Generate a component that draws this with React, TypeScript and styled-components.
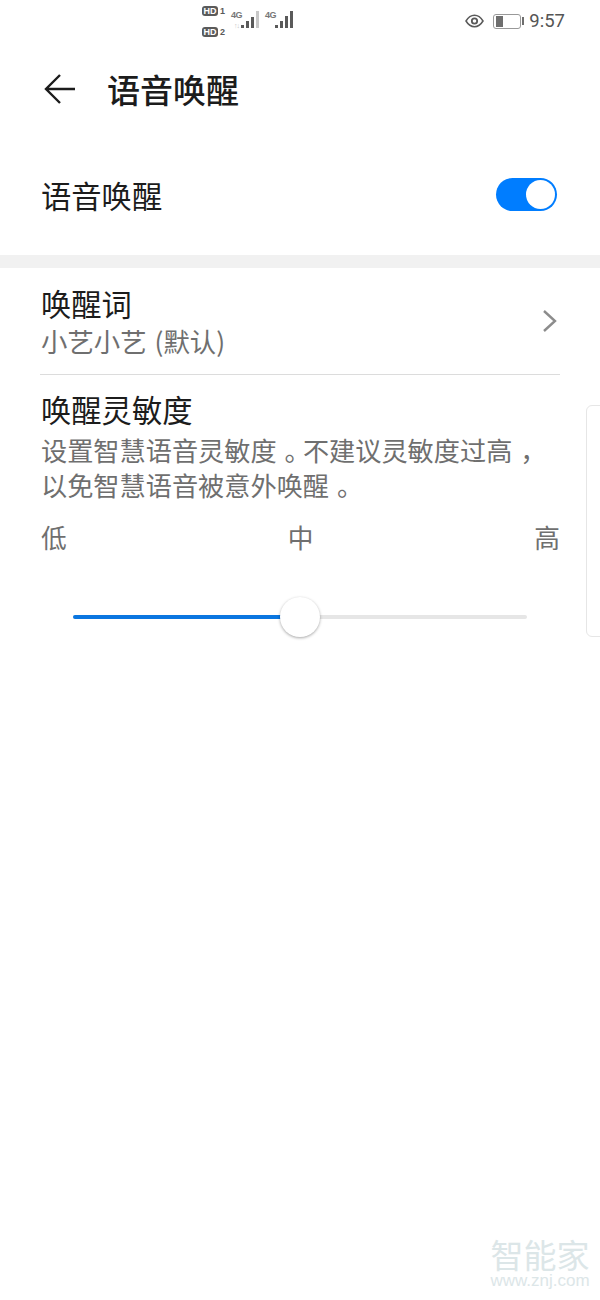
import { createGlobalStyle, styled } from 'styled-components'

const GlobalStyle = createGlobalStyle`
  html, body {
    margin: 0;
    padding: 0;
    background: #fff;
  }
  body {
    font-family: "Noto Sans CJK SC", "Noto Sans", sans-serif;
    color: #1a1a1a;
  }
`

const Page = styled.div`
  position: relative;
  width: 600px;
  height: 1300px;
  overflow: hidden;
  background: #fff;
`

const StatusBar = styled.div`
  display: flex;
  align-items: flex-start;
  height: 44px;
  box-sizing: border-box;
  padding: 6px 35px 0 202px;
`

const SimColumn = styled.div`
  display: flex;
  flex-direction: column;
  gap: 11px;
  margin-right: 5px;
`

const SimTag = styled.div`
  display: flex;
  align-items: center;
  gap: 2px;
`

const HdBadge = styled.span`
  width: 16px;
  height: 10px;
  border-radius: 3px;
  background: #5a5a5a;
  color: #fff;
  font: 700 9px/10px "Liberation Sans", sans-serif;
  text-align: center;
`

const SimNumber = styled.span`
  width: 6px;
  font: 700 9px/10px "Liberation Sans", sans-serif;
  color: #5a5a5a;
`

const Signal = styled.div`
  position: relative;
  display: flex;
  align-items: flex-end;
  gap: 2px;
  width: 28px;
  height: 17px;
  margin: 5px 6px 0 0;
  padding-left: 10px;
  box-sizing: border-box;
`

const SignalLabel = styled.span`
  position: absolute;
  left: 0;
  top: 0;
  font: 700 9px/9px "Liberation Sans", sans-serif;
  letter-spacing: -0.5px;
  color: #777;
`

const DataArrows = styled.span`
  position: absolute;
  left: 3px;
  top: 11px;
  font: 700 7px/7px "Liberation Sans", sans-serif;
  letter-spacing: -1px;
  color: #c4c4c4;
`

const SignalBar = styled.span<{ $h: number; $dim?: boolean }>`
  width: 3px;
  height: ${(p) => p.$h}px;
  background: ${(p) => (p.$dim ? '#c8c8c8' : '#5a5a5a')};
`

const StatusRight = styled.div`
  display: flex;
  align-items: center;
  margin: -3px 0 0 auto;
  height: 36px;
`

const Clock = styled.span`
  margin-left: 5px;
  font: 400 18.5px/36px "Roboto", sans-serif;
  color: #555;
`

const Battery = styled.div`
  display: flex;
  align-items: center;
  margin-left: 9px;
`

const BatteryBody = styled.div`
  width: 28px;
  height: 15px;
  box-sizing: border-box;
  padding: 1px 2px;
  border: 1px solid #999;
  border-radius: 3px;
`

const BatteryLevel = styled.div`
  width: 7px;
  height: 100%;
  background: #6e6e6e;
`

const BatteryTip = styled.div`
  width: 2px;
  height: 8px;
  margin-left: 1px;
  background: #6e6e6e;
`

const Header = styled.header`
  display: flex;
  align-items: center;
  height: 90px;
  padding-left: 44px;
  box-sizing: border-box;
`

const BackIcon = styled.svg`
  width: 32px;
  height: 32px;
  margin-right: 31px;
`

const Title = styled.h1`
  margin: 0;
  font-size: 33px;
  line-height: 40px;
  font-weight: 500;
  color: #1c1c1c;
`

const SwitchRow = styled.div`
  display: flex;
  align-items: center;
  justify-content: space-between;
  height: 121px;
  padding: 0 43px 0 41px;
`

const RowTitle = styled.div`
  font-size: 30.3px;
  line-height: 38px;
  color: #1c1c1c;
`

const Switch = styled.div`
  display: flex;
  align-items: center;
  justify-content: flex-end;
  width: 61px;
  height: 33px;
  padding: 2px;
  box-sizing: border-box;
  border-radius: 17px;
  background: #007dff;
`

const SwitchKnob = styled.div`
  width: 29px;
  height: 29px;
  border-radius: 50%;
  background: #fff;
`

const SectionGap = styled.div`
  height: 13px;
  background: #f1f1f1;
`

const Section = styled.section`
  padding: 0 40px 0 41px;
`

const LinkRow = styled.div`
  display: flex;
  align-items: center;
  justify-content: space-between;
  height: 107px;
  margin-left: -1px;
  padding: 2px 0 0 1px;
  border-bottom: 1px solid #dcdcdc;
  box-sizing: border-box;
`

const Subtitle = styled.div`
  font-size: 26.4px;
  line-height: 38px;
  word-spacing: 2px;
  color: #6f6f6f;
`

const Chevron = styled.svg`
  width: 16px;
  height: 24px;
  margin: 0 2px 2px 0;
`

const SensitivityTitle = styled(RowTitle)`
  margin-top: 15px;
`

const Description = styled.p`
  margin: 5px 0 0;
  font-size: 26.2px;
  line-height: 35px;
  color: #6f6f6f;
  white-space: nowrap;
`

// the phone's font centres full-width punctuation in its cell
const Punct = styled.span`
  display: inline-block;
  transform: translateX(0.3em);
`

const Levels = styled.div`
  display: flex;
  justify-content: space-between;
  margin-top: 15px;
  font-size: 25.7px;
  line-height: 38px;
  color: #6f6f6f;
`

const Slider = styled.div`
  position: relative;
  height: 4px;
  margin: 59px 33px 0 32px;
  border-radius: 2px;
  background: #e6e6e6;
`

const SliderFill = styled.div`
  height: 100%;
  border-radius: 2px;
  background: #0a76e0;
`

const SliderThumb = styled.div`
  position: absolute;
  top: 50%;
  width: 40px;
  height: 40px;
  border-radius: 50%;
  background: #fff;
  transform: translate(-50%, -50%);
  box-shadow: 0 1px 3px rgba(0, 0, 0, 0.35);
`

const EdgeHandle = styled.div`
  position: absolute;
  top: 405px;
  left: 586px;
  width: 30px;
  height: 232px;
  box-sizing: border-box;
  border: 1px solid #e6e6e6;
  border-radius: 6px;
`

const Watermark = styled.div`
  position: absolute;
  left: 488px;
  top: 1238px;
  width: 104px;
  text-align: center;
  color: #dce6e8;
`

const WatermarkName = styled.div`
  font-size: 33px;
  line-height: 33px;
  white-space: nowrap;
`

const WatermarkUrl = styled.div`
  font: 400 17px/20px "Liberation Sans", sans-serif;
  white-space: nowrap;
`

const SignalGroup = ({
  bars,
  arrows,
}: {
  bars: { h: number; dim?: boolean }[]
  arrows?: boolean
}) => (
  <Signal>
    <SignalLabel>4G</SignalLabel>
    {arrows && <DataArrows>↑↓</DataArrows>}
    {bars.map((b, i) => (
      <SignalBar key={i} $h={b.h} $dim={b.dim} />
    ))}
  </Signal>
)

const App = () => {
  const sliderValue = 0.5

  return (
    <Page>
      <GlobalStyle />
      <StatusBar>
        <SimColumn>
          <SimTag>
            <HdBadge>HD</HdBadge>
            <SimNumber>1</SimNumber>
          </SimTag>
          <SimTag>
            <HdBadge>HD</HdBadge>
            <SimNumber>2</SimNumber>
          </SimTag>
        </SimColumn>
        <SignalGroup
          arrows
          bars={[{ h: 3 }, { h: 7 }, { h: 11 }, { h: 17, dim: true }]}
        />
        <SignalGroup bars={[{ h: 3 }, { h: 7 }, { h: 12 }, { h: 17 }]} />
        <StatusRight>
          <svg width="19" height="14" viewBox="0 0 19 14" fill="none">
            <path
              d="M1 7c2.300-3.800 5-5.700 8.500-5.700S15.700 3.200 18 7c-2.300 3.800-5 5.700-8.500 5.700S3.300 10.800 1 7z"
              stroke="#5a5a5a"
              strokeWidth="1.500"
            />
            <circle cx="9.500" cy="7" r="2.700" stroke="#5a5a5a" strokeWidth="1.800" />
          </svg>
          <Battery>
            <BatteryBody>
              <BatteryLevel />
            </BatteryBody>
            <BatteryTip />
          </Battery>
          <Clock>9:57</Clock>
        </StatusRight>
      </StatusBar>

      <Header>
        <BackIcon viewBox="0 0 32 32" fill="none">
          <path
            d="M16 2 2 16l14 14M2 16h29"
            stroke="#1c1c1c"
            strokeWidth="2.400"
          />
        </BackIcon>
        <Title>语音唤醒</Title>
      </Header>

      <SwitchRow>
        <RowTitle>语音唤醒</RowTitle>
        <Switch>
          <SwitchKnob />
        </Switch>
      </SwitchRow>

      <SectionGap />

      <Section>
        <LinkRow>
          <div>
            <RowTitle>唤醒词</RowTitle>
            <Subtitle>小艺小艺 (默认)</Subtitle>
          </div>
          <Chevron viewBox="0 0 16 24" fill="none">
            <path d="M2 2l11 10L2 22" stroke="#8c8c8c" strokeWidth="2.400" />
          </Chevron>
        </LinkRow>
        <SensitivityTitle>唤醒灵敏度</SensitivityTitle>
        <Description>
          设置智慧语音灵敏度<Punct>。</Punct>不建议灵敏度过高<Punct>，</Punct>
          <br />
          以免智慧语音被意外唤醒<Punct>。</Punct>
        </Description>
        <Levels>
          <span>低</span>
          <span>中</span>
          <span>高</span>
        </Levels>
        <Slider>
          <SliderFill style={{ width: `${sliderValue * 100}%` }} />
          <SliderThumb style={{ left: `${sliderValue * 100}%` }} />
        </Slider>
      </Section>

      <EdgeHandle />

      <Watermark>
        <WatermarkName>智能家</WatermarkName>
        <WatermarkUrl>www.znj.com</WatermarkUrl>
      </Watermark>
    </Page>
  )
}

export default App
